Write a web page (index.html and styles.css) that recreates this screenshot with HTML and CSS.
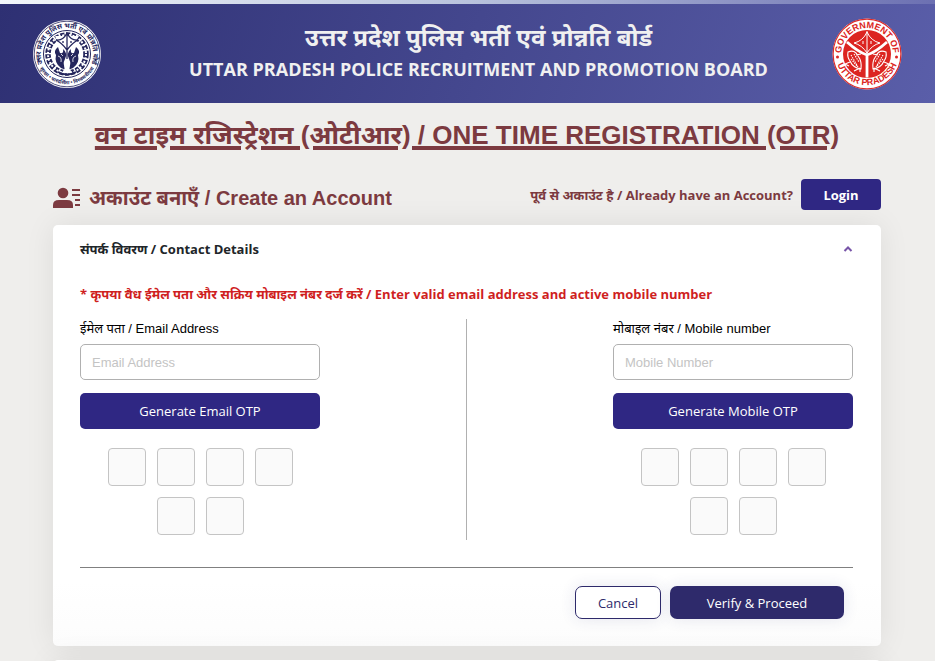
FILE: index.html
```html
<!DOCTYPE html>
<html lang="hi">
<head>
<meta charset="utf-8">
<meta name="viewport" content="width=device-width, initial-scale=1">
<title>One Time Registration (OTR)</title>
<link rel="stylesheet" href="styles.css">
</head>
<body>
<div class="top-strip"></div>
<header class="banner">
  <svg class="emblem" viewBox="0 0 70 70" aria-hidden="true">
    <defs>
      <path id="police-top" d="M10 43A26.200 26.200 0 1 1 60 43"/>
      <path id="police-bottom" d="M5 42A31 31 0 0 0 65 42"/>
    </defs>
    <circle cx="34" cy="35" r="34" fill="#fff"/>
    <g transform="translate(-1 0)">
    <circle cx="35" cy="35" r="32.800" fill="none" stroke="#25265c" stroke-width=".8"/>
    <circle cx="35" cy="35" r="23.500" fill="#fff" stroke="#25265c"/>
    <text class="ring-text-dark"><textPath href="#police-top" startOffset="50%">उत्तर प्रदेश पुलिस भर्ती एवं प्रोन्नति बोर्ड</textPath></text>
    <text class="ring-text-small"><textPath href="#police-bottom" startOffset="50%">सुरक्षा • पारदर्शिता • विश्वसनीयता</textPath></text>
    <circle cx="6.500" cy="41" r="1.200" fill="#25265c"/><circle cx="63.500" cy="41" r="1.200" fill="#25265c"/>
    <circle cx="35" cy="35" r="19" fill="none" stroke="#25265c" stroke-width="5.500" stroke-dasharray="4 1.500"/>
    <circle cx="35" cy="35" r="19" fill="none" stroke="#fff" stroke-width="2" stroke-dasharray="2 1.500"/>
    <path d="M23 17H47L38 31H32Z" fill="#fff"/>
    <path d="M24 21Q31 22 35 14Q39 22 46 21Q40 24 35 31Q30 24 24 21ZM35 14V40M31 22v2M39 22v2" fill="none" stroke="#25265c" stroke-width="1.300"/>
    <path d="M26 28Q21 32 24 36Q22 44 29 49L34 51Q30 45 33 40Q36 34 31 30Q32 35 28 34ZM44 28Q49 32 46 36Q48 44 41 49L36 51Q40 45 37 40Q34 34 39 30Q38 35 42 34Z" fill="#25265c"/>
    <path d="M26 37q4 1 3 6M44 37q-4 1-3 6M29 35l2 2M41 35l-2 2" fill="none" stroke="#fff" stroke-width=".8"/>
    <path d="M32.500 43h5v7l3 4H29.500l3-4z" fill="#fff"/>
    <path d="M26 53q9 5 18 0" fill="none" stroke="#25265c" stroke-width="2"/>
    </g>
  </svg>
  <div class="banner-text">
    <p class="board-hi">उत्तर प्रदेश पुलिस भर्ती एवं प्रोन्नति बोर्ड</p>
    <p class="board-en">UTTAR PRADESH POLICE RECRUITMENT AND PROMOTION BOARD</p>
  </div>
  <svg class="emblem" viewBox="0 0 70 72" aria-hidden="true">
    <defs>
      <path id="gov-top" d="M10.500 44A25.800 25.800 0 1 1 59.500 44"/>
      <path id="gov-bottom" d="M4 42A31.700 31.700 0 0 0 66 42"/>
    </defs>
    <ellipse cx="35" cy="36" rx="34.500" ry="35.500" fill="#fff"/>
    <ellipse cx="35" cy="36" rx="33.900" ry="34.900" fill="none" stroke="#dc2c2b" stroke-width="1.200"/>
    <circle cx="35" cy="36" r="24" fill="#dc2421"/>
    <text class="ring-text-red"><textPath href="#gov-top" startOffset="50%">GOVERNMENT OF</textPath></text>
    <text class="ring-text-red"><textPath href="#gov-bottom" startOffset="50%">UTTAR PRADESH</textPath></text>
    <circle cx="5.500" cy="39" r="1.500" fill="#dc2421"/><circle cx="64.500" cy="39" r="1.500" fill="#dc2421"/>
    <path d="M15 24Q26 34 35 37Q44 34 55 24M35 36V59.500" fill="none" stroke="#fff" stroke-width="2.800"/>
    <path d="M22 25Q31 23 35 14Q39 23 48 25Q40 27 35 35Q30 27 22 25ZM35 13V36" fill="none" stroke="#fff"/>
    <path d="M31 23v3M39 23v3" stroke="#fff"/>
    <g fill="none" stroke="#fff" stroke-width="1.100">
      <path d="M16 34Q23 31 26 38Q30 43 29 51Q21 50 18 43Q15 39 16 34ZM18 44L13 46L17 48M24 37l5-1M28 50l-6 3M28 50l0 4"/>
      <path d="M19 37l7 12M19 41l6 7M22 36l5 8" stroke-dasharray="1.500 1"/>
      <path d="M54 34Q47 31 44 38Q40 43 41 51Q49 50 52 43Q55 39 54 34ZM52 44L57 46L53 48M46 37l-5-1M42 50l6 3M42 50l0 4"/>
      <path d="M51 37l-7 12M51 41l-6 7M48 36l-5 8" stroke-dasharray="1.500 1"/>
    </g>
  </svg>
</header>

<main class="page">
  <h1 class="page-title">वन टाइम रजिस्ट्रेशन (ओटीआर) / ONE TIME REGISTRATION (OTR)</h1>

  <div class="account-bar">
    <h2 class="account-title">
      <svg class="account-icon" viewBox="0 0 28 22" aria-hidden="true">
        <circle cx="10" cy="6" r="5.300"/>
        <path d="M0 21V18Q0 13 6 13H14Q20 13 20 18V21Z"/>
        <path d="M19 2h8v2h-8zM19 7h8v2h-8zM22 12h5v2h-5zM22 17h5v2h-5z"/>
      </svg>
      अकाउंट बनाएँ / Create an Account
    </h2>
    <div class="login">
      <span>पूर्व से अकाउंट है / Already have an Account?</span>
      <button type="button" class="btn btn-login">Login</button>
    </div>
  </div>

  <form class="card">
    <div class="card-head">
      <h3 class="card-title">संपर्क विवरण / Contact Details</h3>
      <button type="button" class="toggle" aria-label="Collapse" aria-expanded="true">
        <svg viewBox="0 0 10 8" width="10" height="8"><path d="M1.500 6L5 2.500L8.500 6" fill="none" stroke="#7754a8" stroke-width="2"/></svg>
      </button>
    </div>
    <p class="notice">* कृपया वैध ईमेल पता और सक्रिय मोबाइल नंबर दर्ज करें / Enter valid email address and active mobile number</p>
    <div class="contact">
      <section class="channel">
        <label for="email">ईमेल पता / Email Address</label>
        <input class="field" id="email" type="email" placeholder="Email Address">
        <button type="button" class="btn btn-otp">Generate Email OTP</button>
        <div class="otp">
          <input maxlength="1" aria-label="Email OTP digit 1"><input maxlength="1" aria-label="Email OTP digit 2"><input maxlength="1" aria-label="Email OTP digit 3"><input maxlength="1" aria-label="Email OTP digit 4"><input maxlength="1" aria-label="Email OTP digit 5"><input maxlength="1" aria-label="Email OTP digit 6">
        </div>
      </section>
      <div class="divider"></div>
      <section class="channel">
        <label for="mobile">मोबाइल नंबर / Mobile number</label>
        <input class="field" id="mobile" type="tel" placeholder="Mobile Number">
        <button type="button" class="btn btn-otp">Generate Mobile OTP</button>
        <div class="otp">
          <input maxlength="1" aria-label="Mobile OTP digit 1"><input maxlength="1" aria-label="Mobile OTP digit 2"><input maxlength="1" aria-label="Mobile OTP digit 3"><input maxlength="1" aria-label="Mobile OTP digit 4"><input maxlength="1" aria-label="Mobile OTP digit 5"><input maxlength="1" aria-label="Mobile OTP digit 6">
        </div>
      </section>
    </div>
    <div class="actions">
      <button type="reset" class="btn btn-cancel">Cancel</button>
      <button type="submit" class="btn btn-verify">Verify &amp; Proceed</button>
    </div>
  </form>
  <section class="card card-next"></section>
</main>
</body>
</html>
```
FILE: styles.css
```css
* { box-sizing: border-box; }
html { background: #efeeec; }
body {
  margin: 0;
  height: 100vh;
  overflow: hidden;
  color: #212529;
  font-family: "Open Sans", "Noto Sans", sans-serif;
  font-size: 13px;
}
h1, h2, h3, p { margin: 0; }
button, input { font: inherit; }

.top-strip { height: 4px; background: linear-gradient(90deg, #f3f7fb, #b9c3dd 50%, #6c70b2); }

.banner {
  display: flex;
  align-items: center;
  justify-content: space-between;
  height: 99px;
  padding: 0 33px;
  background: linear-gradient(110deg, #2e3073, #5a5ea9);
}
.emblem { width: 70px; height: 72px; flex: none; }
.ring-text-dark, .ring-text-small, .ring-text-red { text-anchor: middle; font-weight: 700; }
.ring-text-dark { fill: #25265c; font-size: 7px; }
.ring-text-small { fill: #25265c; font-size: 5px; }
.ring-text-red { fill: #dc2421; font-family: "Liberation Sans", sans-serif; font-size: 9px; }
.banner-text { padding: 0 0 6px 22px; color: #f0f0f0; font-weight: 700; text-align: center; }
.board-hi { font-size: 24px; line-height: 36px; }
.board-en { font-size: 18px; line-height: 28px; }

.page { padding: 0 54px 0 53px; }
.page-title {
  padding-top: 12px;
  color: #7c3a40;
  font-family: "Liberation Sans", "Noto Sans", sans-serif;
  font-size: 26px;
  line-height: 40px;
  text-align: center;
  text-decoration: underline 4px;
  white-space: nowrap;
}
.account-bar {
  display: flex;
  align-items: flex-end;
  justify-content: space-between;
  padding: 24px 0 15px;
  color: #7c3a40;
}
.account-title {
  display: flex;
  align-items: center;
  gap: 8px;
  font-family: "Liberation Sans", "Noto Sans", sans-serif;
  font-size: 20px;
  line-height: 24px;
}
.account-icon { width: 28px; height: 22px; fill: #7c3a40; }
.login { display: flex; align-items: center; gap: 8px; font-weight: 700; }

.btn { border: 0; border-radius: 5px; padding: 0; color: #fff; background: #2f2783; }
.btn-login { width: 80px; height: 31px; border-radius: 4px; font-weight: 700; }

.card {
  padding: 0 28px 27px 27px;
  border-radius: 5px;
  background: linear-gradient(#fff 85%, #fcfcfc);
  box-shadow: 0 0 30px rgba(0, 0, 0, 0.08);
}
.card-next { height: 60px; margin-top: 14px; }
.card-head { display: flex; align-items: center; justify-content: space-between; height: 48px; }
.card-title { font-size: 13px; font-weight: 700; }
.toggle { display: flex; border: 0; padding: 0; background: none; }
.notice { padding-top: 10px; color: #cf1f1f; font-weight: 700; line-height: 22px; }

.contact {
  display: flex;
  justify-content: space-between;
  margin-top: 14px;
  padding-bottom: 27px;
  border-bottom: 1px solid #808080;
}
.channel { width: 240px; display: flex; flex-direction: column; padding-bottom: 5px; }
.channel label { color: #000; font-family: "Liberation Sans", "Noto Sans", sans-serif; font-size: 13px; line-height: 20px; margin-bottom: 5px; }
.field {
  width: 100%;
  height: 36px;
  padding: 0 11px;
  border: 1px solid #b0b0b0;
  border-radius: 5px;
  background: #fff;
  font-family: "Liberation Sans", sans-serif;
}
.field::placeholder { color: #c4c4c4; opacity: 1; }
.btn-otp { height: 36px; margin-top: 13px; }
.otp { display: flex; flex-wrap: wrap; justify-content: center; gap: 11px; margin-top: 19px; padding: 0 20px; }
.otp input {
  width: 38px;
  height: 38px;
  padding: 0;
  border: 1px solid #c4c4c4;
  border-radius: 4px;
  background: #fafafa;
  text-align: center;
}
.divider { width: 1px; background: #b0b0b0; }

.actions { display: flex; justify-content: flex-end; gap: 9px; padding: 18px 9px 0 0; }
.actions .btn { height: 33px; border-radius: 7px; box-shadow: 0 0 15px rgba(50, 60, 120, 0.12); }
.actions .btn-cancel { width: 86px; border: 1px solid #2e2a6b; color: #2e2a6b; background: #fff; }
.actions .btn-verify { width: 174px; background: #2e2a6b; }
```
